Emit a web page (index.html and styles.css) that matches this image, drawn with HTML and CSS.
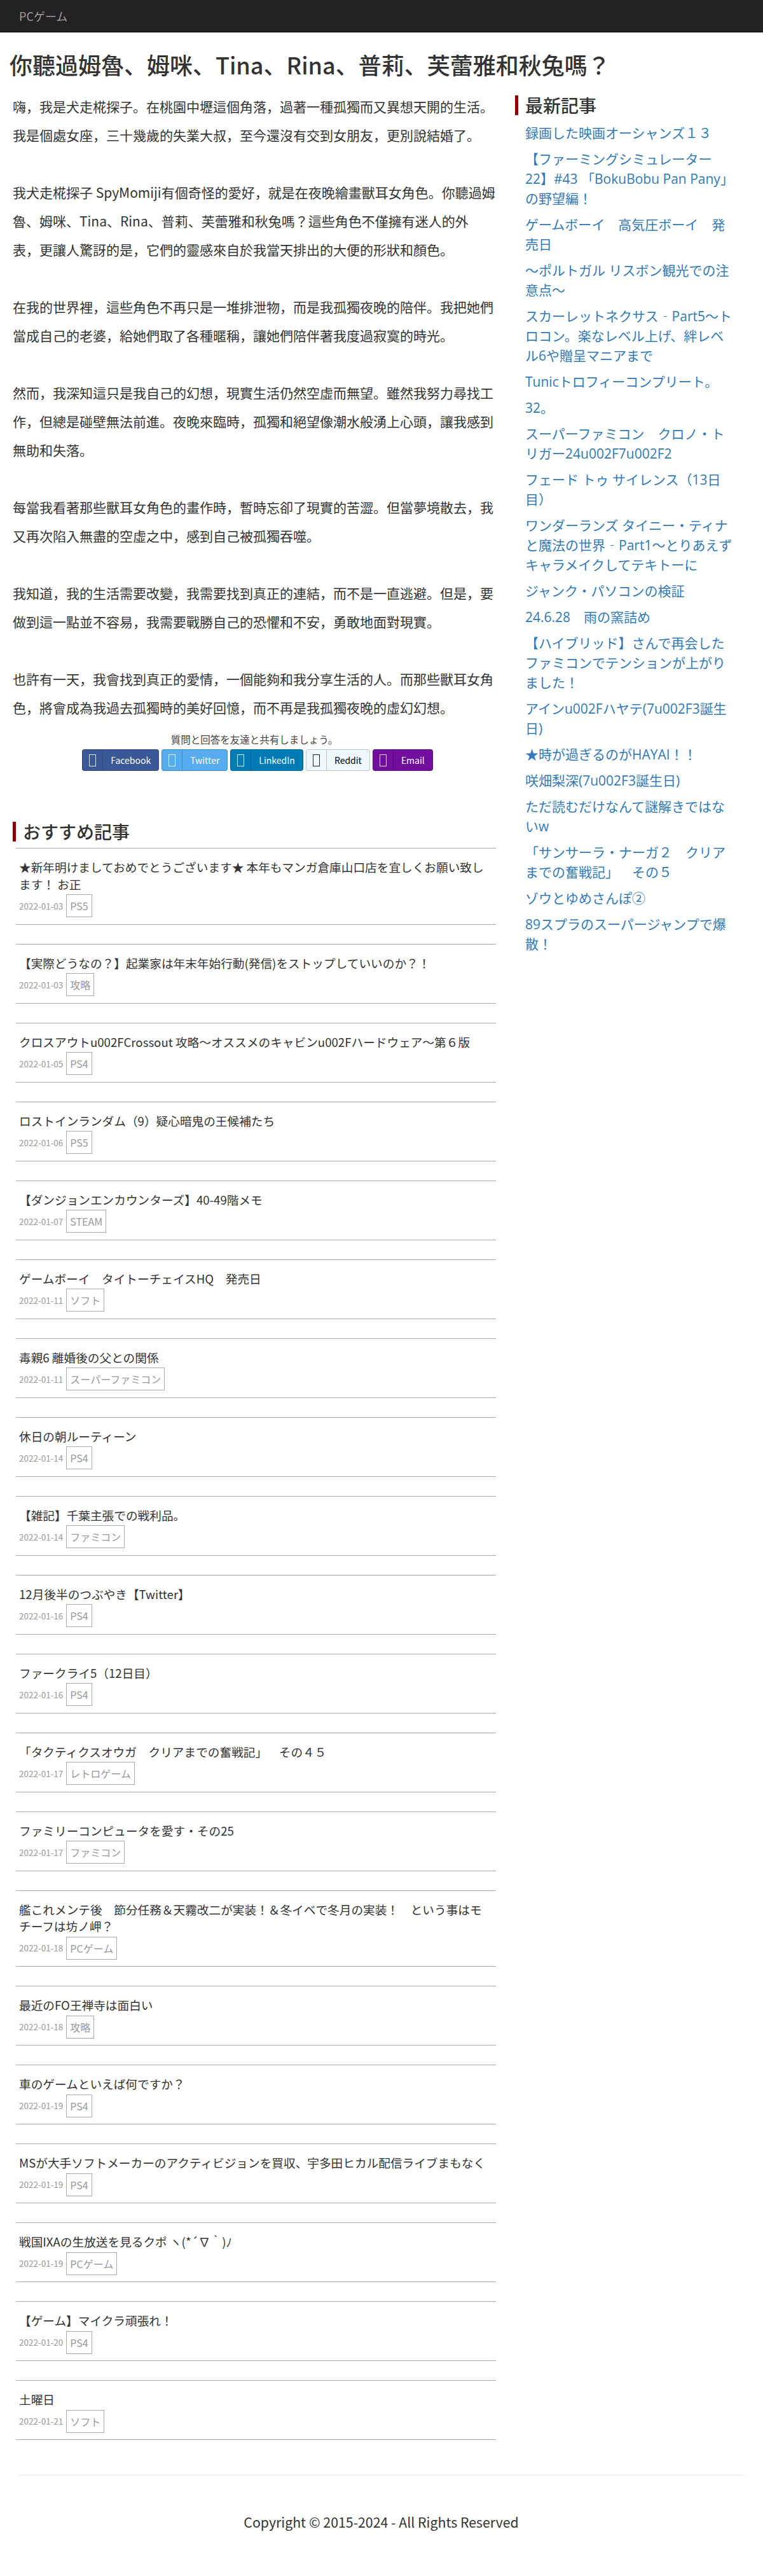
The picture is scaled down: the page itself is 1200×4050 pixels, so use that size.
FILE: index.html
```html
<!DOCTYPE html>
<html lang="ja">
<head>
    <meta charset="UTF-8">
    <meta name="viewport" content="width=device-width, initial-scale=1.0">
    <title>你聽過姆魯、姆咪、Tina、Rina、普莉、芙蕾雅和秋兔嗎？</title>
    <link rel="stylesheet" href="styles.css">
</head>
<body>
    <nav class="navbar">
        <a class="navbar-brand" href="#">PCゲーム</a>
    </nav>

    <div class="page-row">
        <main class="main-col">
            <h1 class="post-title">你聽過姆魯、姆咪、Tina、Rina、普莉、芙蕾雅和秋兔嗎？</h1>
            <article class="post-body">
                <p>嗨，我是犬走椛探子。在桃園中壢這個角落，過著一種孤獨而又異想天開的生活。<br>我是個處女座，三十幾歲的失業大叔，至今還沒有交到女朋友，更別說結婚了。</p>
                <p>我犬走椛探子 SpyMomiji有個奇怪的愛好，就是在夜晚繪畫獸耳女角色。你聽過姆魯、姆咪、Tina、Rina、普莉、芙蕾雅和秋兔嗎？這些角色不僅擁有迷人的外<br>表，更讓人驚訝的是，它們的靈感來自於我當天排出的大便的形狀和顏色。</p>
                <p>在我的世界裡，這些角色不再只是一堆排泄物，而是我孤獨夜晚的陪伴。我把她們當成自己的老婆，給她們取了各種暱稱，讓她們陪伴著我度過寂寞的時光。</p>
                <p>然而，我深知這只是我自己的幻想，現實生活仍然空虛而無望。雖然我努力尋找工作，但總是碰壁無法前進。夜晚來臨時，孤獨和絕望像潮水般湧上心頭，讓我感到無助和失落。</p>
                <p>每當我看著那些獸耳女角色的畫作時，暫時忘卻了現實的苦澀。但當夢境散去，我又再次陷入無盡的空虛之中，感到自己被孤獨吞噬。</p>
                <p>我知道，我的生活需要改變，我需要找到真正的連結，而不是一直逃避。但是，要做到這一點並不容易，我需要戰勝自己的恐懼和不安，勇敢地面對現實。</p>
                <p>也許有一天，我會找到真正的愛情，一個能夠和我分享生活的人。而那些獸耳女角色，將會成為我過去孤獨時的美好回憶，而不再是我孤獨夜晚的虛幻幻想。</p>
            </article>

            <section class="share">
                <p class="share-text">質問と回答を友達と共有しましょう。</p>
                <div class="share-buttons">
                    <a class="btn-social btn-facebook" href="#"><span class="btn-icon"><i class="tofu"></i></span><span class="btn-label">Facebook</span></a>
                    <a class="btn-social btn-twitter" href="#"><span class="btn-icon"><i class="tofu"></i></span><span class="btn-label">Twitter</span></a>
                    <a class="btn-social btn-linkedin" href="#"><span class="btn-icon"><i class="tofu"></i></span><span class="btn-label">LinkedIn</span></a>
                    <a class="btn-social btn-reddit" href="#"><span class="btn-icon"><i class="tofu"></i></span><span class="btn-label">Reddit</span></a>
                    <a class="btn-social btn-email" href="#"><span class="btn-icon"><i class="tofu"></i></span><span class="btn-label">Email</span></a>
                </div>
            </section>

            <h2 class="section-title recommend-title">おすすめ記事</h2>
            <ul class="article-list">
                <li class="article-item">
                    <a class="article-link" href="#">★新年明けましておめでとうございます★ 本年もマンガ倉庫山口店を宜しくお願い致します！ お正</a>
                    <div class="article-meta"><span class="article-date">2022-01-03</span><a class="article-tag" href="#">PS5</a></div>
                </li>
                <li class="article-item">
                    <a class="article-link" href="#">【実際どうなの？】起業家は年末年始行動(発信)をストップしていいのか？！</a>
                    <div class="article-meta"><span class="article-date">2022-01-03</span><a class="article-tag" href="#">攻略</a></div>
                </li>
                <li class="article-item">
                    <a class="article-link" href="#">クロスアウトu002FCrossout 攻略～オススメのキャビンu002Fハードウェア～第６版</a>
                    <div class="article-meta"><span class="article-date">2022-01-05</span><a class="article-tag" href="#">PS4</a></div>
                </li>
                <li class="article-item">
                    <a class="article-link" href="#">ロストインランダム（9）疑心暗鬼の王候補たち</a>
                    <div class="article-meta"><span class="article-date">2022-01-06</span><a class="article-tag" href="#">PS5</a></div>
                </li>
                <li class="article-item">
                    <a class="article-link" href="#">【ダンジョンエンカウンターズ】40-49階メモ</a>
                    <div class="article-meta"><span class="article-date">2022-01-07</span><a class="article-tag" href="#">STEAM</a></div>
                </li>
                <li class="article-item">
                    <a class="article-link" href="#">ゲームボーイ　タイトーチェイスHQ　発売日</a>
                    <div class="article-meta"><span class="article-date">2022-01-11</span><a class="article-tag" href="#">ソフト</a></div>
                </li>
                <li class="article-item">
                    <a class="article-link" href="#">毒親6 離婚後の父との関係</a>
                    <div class="article-meta"><span class="article-date">2022-01-11</span><a class="article-tag" href="#">スーパーファミコン</a></div>
                </li>
                <li class="article-item">
                    <a class="article-link" href="#">休日の朝ルーティーン</a>
                    <div class="article-meta"><span class="article-date">2022-01-14</span><a class="article-tag" href="#">PS4</a></div>
                </li>
                <li class="article-item">
                    <a class="article-link" href="#">【雑記】千葉主張での戦利品。</a>
                    <div class="article-meta"><span class="article-date">2022-01-14</span><a class="article-tag" href="#">ファミコン</a></div>
                </li>
                <li class="article-item">
                    <a class="article-link" href="#">12月後半のつぶやき【Twitter】</a>
                    <div class="article-meta"><span class="article-date">2022-01-16</span><a class="article-tag" href="#">PS4</a></div>
                </li>
                <li class="article-item">
                    <a class="article-link" href="#">ファークライ5（12日目）</a>
                    <div class="article-meta"><span class="article-date">2022-01-16</span><a class="article-tag" href="#">PS4</a></div>
                </li>
                <li class="article-item">
                    <a class="article-link" href="#">「タクティクスオウガ　クリアまでの奮戦記」　その４５</a>
                    <div class="article-meta"><span class="article-date">2022-01-17</span><a class="article-tag" href="#">レトロゲーム</a></div>
                </li>
                <li class="article-item">
                    <a class="article-link" href="#">ファミリーコンピュータを愛す・その25</a>
                    <div class="article-meta"><span class="article-date">2022-01-17</span><a class="article-tag" href="#">ファミコン</a></div>
                </li>
                <li class="article-item">
                    <a class="article-link" href="#">艦これメンテ後　節分任務＆天霧改二が実装！＆冬イベで冬月の実装！　という事はモチーフは坊ノ岬？</a>
                    <div class="article-meta"><span class="article-date">2022-01-18</span><a class="article-tag" href="#">PCゲーム</a></div>
                </li>
                <li class="article-item">
                    <a class="article-link" href="#">最近のFO王禅寺は面白い</a>
                    <div class="article-meta"><span class="article-date">2022-01-18</span><a class="article-tag" href="#">攻略</a></div>
                </li>
                <li class="article-item">
                    <a class="article-link" href="#">車のゲームといえば何ですか？</a>
                    <div class="article-meta"><span class="article-date">2022-01-19</span><a class="article-tag" href="#">PS4</a></div>
                </li>
                <li class="article-item">
                    <a class="article-link" href="#">MSが大手ソフトメーカーのアクティビジョンを買収、宇多田ヒカル配信ライブまもなく</a>
                    <div class="article-meta"><span class="article-date">2022-01-19</span><a class="article-tag" href="#">PS4</a></div>
                </li>
                <li class="article-item">
                    <a class="article-link" href="#">戦国IXAの生放送を見るクポ ヽ(*´∇｀)ﾉ</a>
                    <div class="article-meta"><span class="article-date">2022-01-19</span><a class="article-tag" href="#">PCゲーム</a></div>
                </li>
                <li class="article-item">
                    <a class="article-link" href="#">【ゲーム】マイクラ頑張れ！</a>
                    <div class="article-meta"><span class="article-date">2022-01-20</span><a class="article-tag" href="#">PS4</a></div>
                </li>
                <li class="article-item">
                    <a class="article-link" href="#">土曜日</a>
                    <div class="article-meta"><span class="article-date">2022-01-21</span><a class="article-tag" href="#">ソフト</a></div>
                </li>
            </ul>
        </main>

        <aside class="side-col">
            <h2 class="section-title">最新記事</h2>
            <ul class="latest-list">
                <li><a href="#">録画した映画オーシャンズ１３</a></li>
                <li><a href="#">【ファーミングシミュレーター22】#43 「BokuBobu Pan Pany」の野望編！</a></li>
                <li><a href="#">ゲームボーイ　高気圧ボーイ　発売日</a></li>
                <li><a href="#">～ポルトガル リスボン観光での注意点～</a></li>
                <li><a href="#">スカーレットネクサス‐Part5～トロコン。楽なレベル上げ、絆レベル6や贈呈マニアまで</a></li>
                <li><a href="#">Tunicトロフィーコンプリート。</a></li>
                <li><a href="#">32。</a></li>
                <li><a href="#">スーパーファミコン　クロノ・トリガー24u002F7u002F2</a></li>
                <li><a href="#">フェード トゥ サイレンス（13日目）</a></li>
                <li><a href="#">ワンダーランズ タイニー・ティナと魔法の世界‐Part1～とりあえずキャラメイクしてテキトーに</a></li>
                <li><a href="#">ジャンク・パソコンの検証</a></li>
                <li><a href="#">24.6.28　雨の窯詰め</a></li>
                <li><a href="#">【ハイブリッド】さんで再会したファミコンでテンションが上がりました！</a></li>
                <li><a href="#">アインu002Fハヤテ(7u002F3誕生日)</a></li>
                <li><a href="#">★時が過ぎるのがHAYAI！！</a></li>
                <li><a href="#">咲畑梨深(7u002F3誕生日)</a></li>
                <li><a href="#">ただ読むだけなんて謎解きではないw</a></li>
                <li><a href="#">「サンサーラ・ナーガ２　クリアまでの奮戦記」　その５</a></li>
                <li><a href="#">ゾウとゆめさんぽ②</a></li>
                <li><a href="#">89スプラのスーパージャンプで爆散！</a></li>
            </ul>
        </aside>
    </div>

    <footer class="site-footer">
        <p>Copyright © 2015-2024 - All Rights Reserved</p>
    </footer>
</body>
</html>
```

FILE: styles.css
```css
/* Base */
body {
    margin: 0;
    font-family: "Noto Sans CJK JP", "Noto Sans CJK SC", sans-serif;
    font-size: 14px;
    line-height: 1.42857;
    color: #333;
    background: #fff;
    text-spacing-trim: space-all;
}

a {
    text-decoration: none;
}

ul {
    margin: 0;
    padding: 0;
    list-style: none;
}

/* Top bar */
.navbar {
    height: 50px;
    padding-left: 30px;
    background: #222;
    border-bottom: 1px solid #080808;
}

.navbar-brand {
    display: block;
    font-size: 18px;
    line-height: 50px;
    color: #9d9d9d;
}

/* Columns */
.page-row {
    display: flex;
}

.main-col {
    width: 800px;
    box-sizing: border-box;
}

.side-col {
    width: 400px;
    box-sizing: border-box;
    padding: 99px 42px 0 10px;
}

/* Article */
.post-title {
    margin: 30px 0 24px 15px;
    font-size: 36px;
    font-weight: 500;
    line-height: 40px;
    white-space: nowrap;
}

.post-body {
    padding: 0 20px;
    font-size: 21px;
    line-height: 45px;
}

.post-body p {
    margin: 0 0 45px;
}

.post-body p:last-child {
    margin-bottom: 0;
}

/* Share buttons */
.share {
    margin-top: 16px;
}

.share-text {
    margin: 0 0 5px;
    font-size: 15.5px;
    line-height: 22px;
    text-align: center;
    color: #444;
}

.share-buttons {
    display: flex;
    justify-content: center;
    gap: 4px;
    margin-left: 10px;
}

.btn-social {
    display: flex;
    height: 34px;
    box-sizing: border-box;
    border: 1px solid rgba(0, 0, 0, 0.2);
    border-radius: 4px;
    font-size: 14px;
    line-height: 32px;
    color: #fff;
}

.btn-icon {
    display: flex;
    align-items: center;
    justify-content: center;
    width: 31px;
    border-right: 1px solid rgba(0, 0, 0, 0.2);
}

.tofu {
    display: block;
    width: 11px;
    height: 19px;
    box-sizing: border-box;
    border: 1.5px solid currentColor;
    opacity: 0.85;
}

.btn-label {
    padding: 0 12px;
}

.btn-facebook { background: #3b5998; }
.btn-twitter { background: #55acee; }
.btn-linkedin { background: #007bb6; }
.btn-reddit { background: #eff7ff; color: #000; border-color: rgba(0, 0, 0, 0.2); }
.btn-email { background: #720e9e; }

/* Section headings */
.section-title {
    margin: 0;
    padding-left: 11px;
    border-left: 5px solid #8b0000;
    font-size: 28px;
    font-weight: 500;
    line-height: 31px;
}

.recommend-title {
    margin: 80px 0 10px 20px;
}

/* Recommended list */
.article-list {
    margin: 0 20px 0 25px;
}

.article-item {
    padding: 16px 0 10.33px 5px;
    border-top: 1px solid #aaa;
    border-bottom: 1px solid #aaa;
    margin-bottom: 30px;
}

.article-item:last-child {
    margin-bottom: 0;
}

.article-link {
    display: block;
    padding-right: 15px;
    font-size: 18.67px;
    line-height: 26.67px;
    color: #333;
}

.article-meta {
    display: flex;
    align-items: center;
    gap: 5px;
    margin-top: 3px;
}

.article-date {
    font-size: 13.5px;
    color: #999;
}

.article-tag {
    padding: 0 5px;
    border: 1px solid #aaa;
    font-size: 16px;
    line-height: 34px;
    color: #999;
}

/* Sidebar list */
.latest-list {
    margin-top: 13px;
    padding: 0 0 0 16px;
    font-family: "Open Sans", "Noto Sans CJK JP", sans-serif;
    font-size: 21px;
    line-height: 31px;
}

.latest-list li {
    margin-bottom: 10px;
}

.latest-list a {
    color: #337ab7;
}

/* Footer */
.site-footer {
    margin: 55px 30px 0 29px;
    padding-top: 55px;
    border-top: 1px solid #eee;
    text-align: center;
    font-size: 21.3px;
    line-height: 36px;
}

.site-footer p {
    margin: 0;
}
```
